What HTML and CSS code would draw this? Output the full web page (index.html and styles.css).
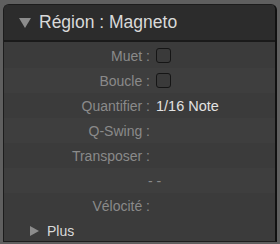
FILE: index.html
```html
<!DOCTYPE html>
<html lang="fr">
<head>
    <meta charset="UTF-8">
    <title>Région : Magneto</title>
    <link rel="stylesheet" href="styles.css">
</head>
<body>
    <div class="panel">
        <div class="header">
            <span class="tri-down"></span>
            <span class="title">Région : Magneto</span>
        </div>
        <div class="rows">
            <div class="row"><span class="label">Muet :</span><span class="check"></span></div>
            <div class="row"><span class="label">Boucle :</span><span class="check"></span></div>
            <div class="row"><span class="label">Quantifier :</span><span class="value">1/16 Note</span></div>
            <div class="row"><span class="label">Q-Swing :</span></div>
            <div class="row"><span class="label">Transposer :</span></div>
            <div class="row"><span class="label"></span><span class="dashes">- -</span></div>
            <div class="row"><span class="label">Vélocité :</span></div>
            <div class="more"><span class="tri-right"></span><span>Plus</span></div>
        </div>
    </div>
</body>
</html>
```

FILE: styles.css
```css
html, body {
    margin: 0;
    height: 100%;
}
body {
    background-color: #5f5f5f;
    padding: 4px 3px 2px 3px;
    box-sizing: border-box;
    font-family: "Liberation Sans", Arial, sans-serif;
}
.panel {
    height: 100%;
    box-sizing: border-box;
    background-color: #3b3b3b;
    border: 1px solid #1c1c1c;
    border-right: 2px solid #111;
    border-radius: 6px 6px 0 0;
    overflow: hidden;
}
.header {
    height: 35px;
    background-color: #2c2c2c;
    border-bottom: 2px solid #1a1a1a;
    display: flex;
    align-items: center;
    padding-left: 15px;
}
.tri-down {
    width: 0;
    height: 0;
    border-left: 6px solid transparent;
    border-right: 6px solid transparent;
    border-top: 10px solid #8c8c8c;
    margin-right: 8px;
}
.title {
    color: #d9d9d9;
    font-size: 17.5px;
}
.rows {
    padding-top: 1px;
}
.row {
    height: 25px;
    display: grid;
    grid-template-columns: 146px auto;
    column-gap: 6px;
    align-items: center;
    font-size: 14px;
}
.row:nth-child(even) {
    background-color: #3e3e3e;
}
.label {
    color: #8a8a8a;
    text-align: right;
}
.value {
    color: #e2e2e2;
    font-size: 14.5px;
}
.dashes {
    color: #8a8a8a;
    margin-left: -8px;
}
.check {
    width: 13px;
    height: 13px;
    border: 1px solid #151515;
    border-radius: 3px;
    background-color: #3a3a3a;
}
.more {
    height: 25px;
    display: flex;
    align-items: center;
    padding-left: 26px;
    color: #d9d9d9;
    font-size: 14px;
}
.tri-right {
    width: 0;
    height: 0;
    border-top: 5px solid transparent;
    border-bottom: 5px solid transparent;
    border-left: 9px solid #8c8c8c;
    margin-right: 8px;
}
```
